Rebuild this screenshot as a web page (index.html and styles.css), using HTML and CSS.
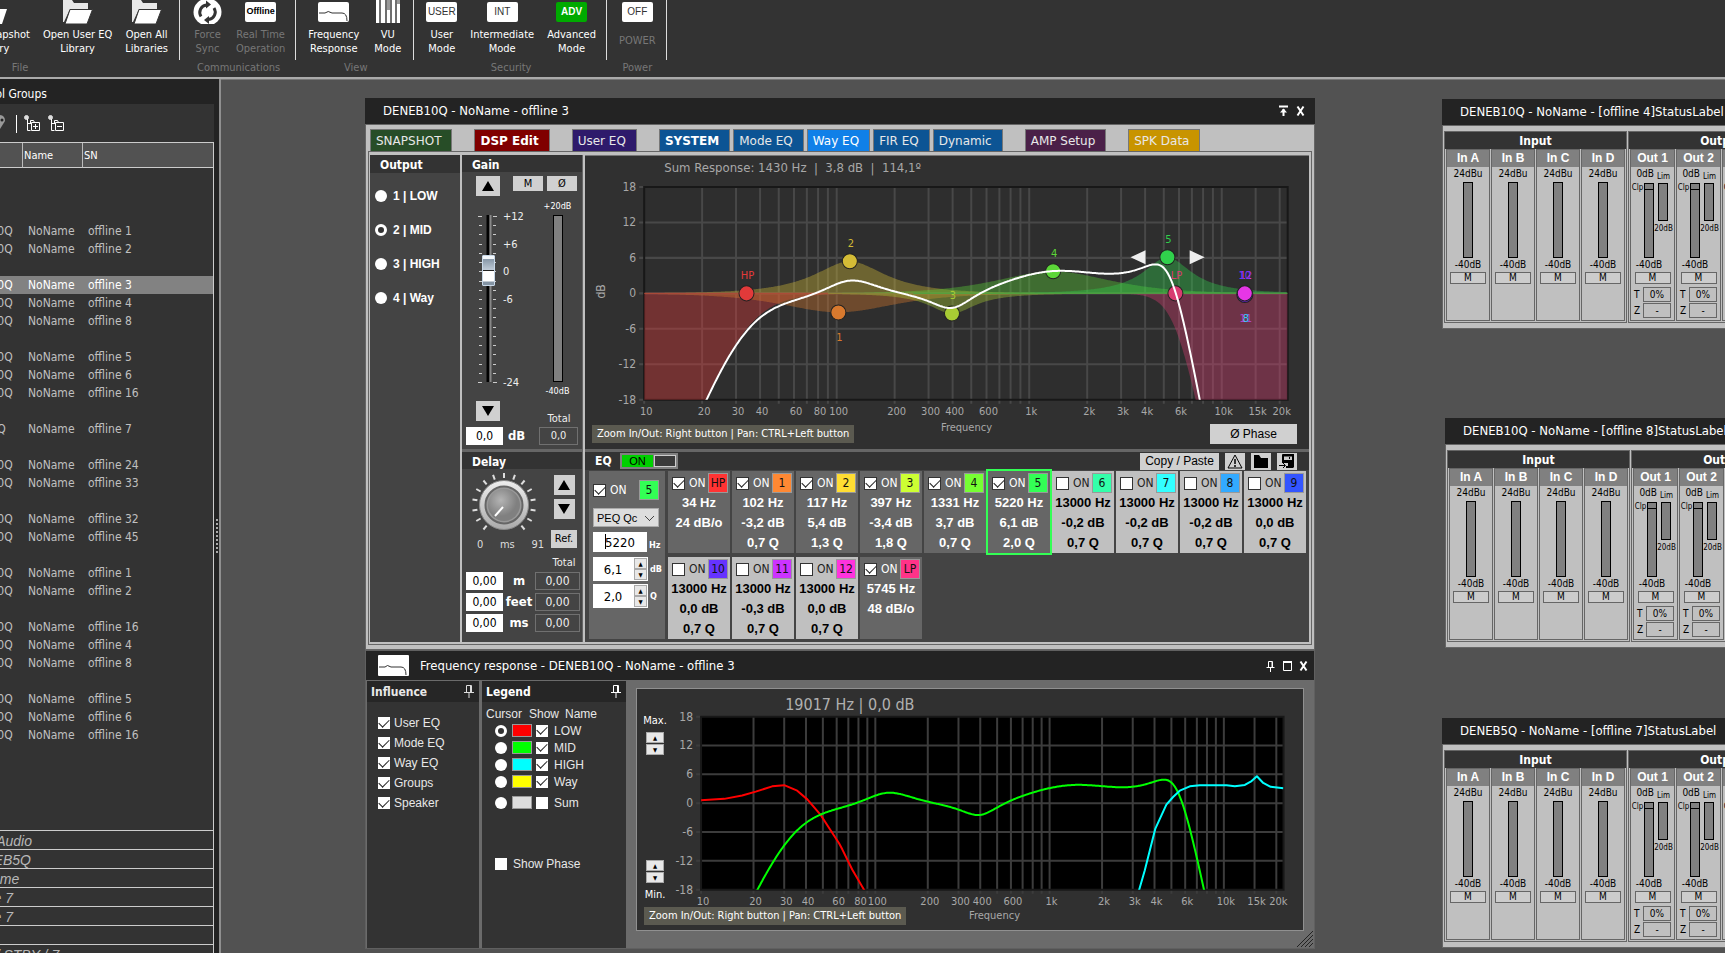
FILE: index.html
```html
<!DOCTYPE html>
<html lang="en">
<head>
<meta charset="utf-8">
<title>DSP Control</title>
<link rel="stylesheet" href="styles.css">
</head>
<body>
<div class="app">
  <header class="ribbon">
    <section class="rgroup rgroup-file">
      <div class="ritems">
        <button class="ritem"><svg class="ricon" viewBox="0 0 31 24"><path d="M0 0h8l2 4h12v4H6L1 20z" fill="#eee"/><path d="M7 9h24l-5 15H1z" fill="#fff"/></svg><span>Open Snapshot<br>Library</span></button>
        <button class="ritem"><svg class="ricon" viewBox="0 0 31 24"><path d="M1 0h9l2 3h14v6H8L2 22H1z" fill="#e8e8e8"/><path d="M8 9.500h22.500L25 24H3z" fill="#fff" stroke="#333"/></svg><span>Open User EQ<br>Library</span></button>
        <button class="ritem"><svg class="ricon" viewBox="0 0 31 24"><path d="M1 0h9l2 3h14v6H8L2 22H1z" fill="#e8e8e8"/><path d="M8 9.500h22.500L25 24H3z" fill="#fff" stroke="#333"/></svg><span>Open All<br>Libraries</span></button>
      </div>
      <h2>File</h2>
    </section>
    <section class="rgroup">
      <div class="ritems">
        <button class="ritem off"><svg class="ricon" viewBox="0 0 31 24"><ellipse cx="15.500" cy="12" rx="14" ry="13.500" fill="#fff"/><path d="M14.500 5a7.500 7.500 0 0 0-5.500 11.500M16.500 19.500a7.500 7.500 0 0 0 5.500-11.500" fill="none" stroke="#333" stroke-width="3"/><path d="M14 0.500v8l5-4zM17 16v8l-5-4z" fill="#333"/></svg><span>Force<br>Sync</span></button>
        <button class="ritem off"><b class="tile tile-dark">Offline</b><span>Real Time<br>Operation</span></button>
      </div>
      <h2>Communications</h2>
    </section>
    <section class="rgroup">
      <div class="ritems">
        <button class="ritem"><svg class="ricon" viewBox="0 0 31 24"><rect y="2" width="31" height="20" rx="2" fill="#fff"/><path d="M1 13h6q3-3 7 0h10q5 0 5 8" fill="none" stroke="#333"/></svg><span>Frequency<br>Response</span></button>
        <button class="ritem"><svg class="ricon" viewBox="0 0 31 24"><path d="M4 0h24v23H4z" fill="#999"/><path d="M4 0h3v23H4zM9 0h4v23H9zM15 10h3v13h-3zM20 0h3v23h-3zM25 4h3v19h-3z" fill="#fff"/><path d="M8 0v23M14 0v23M19 0v23M24 0v23" stroke="#444"/></svg><span>VU<br>Mode</span></button>
      </div>
      <h2>View</h2>
    </section>
    <section class="rgroup">
      <div class="ritems">
        <button class="ritem"><b class="tile">USER</b><span>User<br>Mode</span></button>
        <button class="ritem"><b class="tile">INT</b><span>Intermediate<br>Mode</span></button>
        <button class="ritem"><b class="tile tile-adv">ADV</b><span>Advanced<br>Mode</span></button>
      </div>
      <h2>Security</h2>
    </section>
    <section class="rgroup">
      <div class="ritems">
        <button class="ritem off"><b class="tile">OFF</b><span class="single">POWER</span></button>
      </div>
      <h2>Power</h2>
    </section>
  </header>

  <div class="main">
    <aside class="sidebar">
      <div class="side-col">
        <h1 class="side-title"><span>Control Groups</span></h1>
        <div class="side-tools">
          <svg width="72" height="20" viewBox="0 0 72 20"><path d="M-4 1h3q6 0 6 6l-5 8z" fill="#999"/><circle cx="2" cy="6" r="1.500" fill="#222"/><path d="M16.500 1v18" stroke="#fff"/>
            <g id="tree" fill="none" stroke="#fff"><circle cx="26.500" cy="3.500" r="2" fill="#ddd" stroke="#ddd"/><path d="M27.500 5v11.500h3M28 9.500h3M30.500 9V6.500h3l1 2"/><path d="M31.500 8.500h8v8h-8z" fill="#333"/><path d="M33 12.500h5"/></g>
            <path d="M35.500 10v5" stroke="#fff"/>
            <use href="#tree" x="24"/></svg>
        </div>
        <div class="side-list">
          <table class="groups">
            <thead><tr><th>Device</th><th>Name</th><th>SN</th></tr></thead>
            <tbody id="group-rows"></tbody>
          </table>
        </div>
        <div class="side-props">
          <table class="props">
            <tbody>
              <tr><td>DAS Audio</td></tr><tr><td>DENEB5Q</td></tr><tr><td>NoName</td></tr><tr><td>offline 7</td></tr><tr><td>offline 7</td></tr><tr><td></td></tr><tr><td>OFF / STBY / 7</td></tr>
            </tbody>
          </table>
        </div>
      </div>
      <div class="sash"><i></i><i></i><i></i><i></i><i></i><i></i><i></i><i></i><i></i></div>
    </aside>

    <main class="desk" id="desk">
      <section class="win win-dsp">
        <div class="titlebar">
          <h2>DENEB10Q - NoName - offline 3</h2>
          <svg width="28" height="12" viewBox="0 0 28 12"><path d="M1 1.500h9M5.500 11V4" fill="none" stroke="#fff" stroke-width="2"/><path d="M2 7.500l3.500-4 3.500 4z" fill="#fff"/><path d="M19.500 1.500l6 9M25.500 1.500l-6 9" stroke="#fff" stroke-width="2"/></svg>
        </div>
        <div class="dsp-body">
          <nav class="tabs">
            <button class="tab t-green">SNAPSHOT</button>
            <button class="tab t-red strong apart">DSP Edit</button>
            <button class="tab t-violet apart">User EQ</button>
            <button class="tab t-blue strong apart">SYSTEM</button>
            <button class="tab t-blue">Mode EQ</button>
            <button class="tab t-active">Way EQ</button>
            <button class="tab t-blue">FIR EQ</button>
            <button class="tab t-blue">Dynamic</button>
            <button class="tab t-plum apart">AMP Setup</button>
            <button class="tab t-gold apart">SPK Data</button>
          </nav>
          <div class="dsp-panels">
            <section class="outputs">
              <h3>Output</h3>
              <label><input type="radio" name="out">1 | LOW</label>
              <label><input type="radio" name="out" checked>2 | MID</label>
              <label><input type="radio" name="out">3 | HIGH</label>
              <label><input type="radio" name="out">4 | Way</label>
            </section>
            <div class="levels">
              <section class="gain">
                <h3>Gain</h3>
                <div class="gain-top">
                  <button class="btn arrow" aria-label="Gain up"><svg width="12" height="10" viewBox="0 0 12 10"><path d="M6 0l6 10H0z"/></svg></button>
                  <button class="btn mute">M</button><button class="btn mute">Ø</button>
                </div>
                <div class="gain-mid">
                  <div class="fader">
                    <svg id="fader-scale" width="56" height="205" viewBox="0 0 56 205"></svg>
                    <input type="range" min="-24" max="12" value="0" aria-label="Gain">
                  </div>
                  <div class="vu"><span>+20dB</span><i class="meter"></i><span>-40dB</span></div>
                </div>
                <div class="gain-low">
                  <button class="btn arrow" aria-label="Gain down"><svg width="12" height="10" viewBox="0 0 12 10"><path d="M6 10L0 0h12z"/></svg></button>
                  <span class="total">Total</span>
                </div>
                <div class="gain-val"><input type="text" value="0,0" aria-label="Gain in dB"><b>dB</b><output>0,0</output></div>
              </section>
              <section class="delay">
                <h3>Delay</h3>
                <div class="delay-top">
                  <div class="knob">
                    <svg id="knob" width="68" height="66" viewBox="-34 -33 68 66">
                      <defs><radialGradient id="kg" cx=".4" cy=".35"><stop offset="0" stop-color="#b4b4b4"/><stop offset="1" stop-color="#808080"/></radialGradient>
                      <linearGradient id="kr" x1="0" y1="0" x2="0" y2="1"><stop offset="0" stop-color="#eee"/><stop offset="1" stop-color="#aaa"/></linearGradient></defs>
                      <circle r="24.500" fill="url(#kr)" stroke="#888"/><circle r="18.500" fill="#999" stroke="#666" stroke-width="2"/><circle r="16" fill="url(#kg)"/><path d="M-1 2l-8 9" stroke="#fff" stroke-width="2"/>
                    </svg>
                    <div class="knob-scale"><span>0</span><span>ms</span><span>91</span></div>
                  </div>
                  <div class="delay-btns">
                    <button class="btn arrow" aria-label="Delay up"><svg width="12" height="10" viewBox="0 0 12 10"><path d="M6 0l6 10H0z"/></svg></button>
                    <button class="btn arrow" aria-label="Delay down"><svg width="12" height="10" viewBox="0 0 12 10"><path d="M6 10L0 0h12z"/></svg></button>
                    <button class="btn ref">Ref.</button>
                    <span class="total">Total</span>
                  </div>
                </div>
                <div class="delay-vals">
                  <input type="text" value="0,00" aria-label="Delay in metres"><b>m</b><output>0,00</output>
                  <input type="text" value="0,00" aria-label="Delay in feet"><b>feet</b><output>0,00</output>
                  <input type="text" value="0,00" aria-label="Delay in milliseconds"><b>ms</b><output>0,00</output>
                </div>
              </section>
            </div>
            <div class="eq-side">
              <section class="way-chart">
                <svg id="way-chart" viewBox="586 155 722 293"></svg>
                <div class="chart-foot">
                  <span class="hint">Zoom In/Out: Right button | Pan: CTRL+Left button</span>
                  <span class="axis">Frequency</span>
                  <button class="btn phase">Ø Phase</button>
                </div>
              </section>
              <section class="eq">
                <div class="eq-head">
                  <h3>EQ</h3>
                  <button class="toggle" aria-label="EQ on"><b>ON</b><i></i></button>
                  <button class="btn copy">Copy / Paste</button>
                  <button class="btn sq" aria-label="Warning"><svg width="16" height="15" viewBox="0 0 16 15"><path d="M8 1l7 13H1z" fill="none" stroke="#000"/><path d="M8 5v5M8 11v2" stroke="#000" stroke-width="1.500"/></svg></button>
                  <button class="btn sq" aria-label="Open"><svg width="16" height="15" viewBox="0 0 16 15"><path d="M1 1h5l2 3h7v10H1z"/></svg></button>
                  <button class="btn sq" aria-label="Save"><svg width="16" height="15" viewBox="0 0 16 15"><path d="M3 1q0-1 1-1h11v13l-1 1H7v-2h2V9H3z"/><path d="M5 2.500h8v3.500H5z" fill="#ccc"/><path d="M10.500 3v2" stroke="#000"/><path d="M0 11.500h6M4 9l2.500 2.500L4 14" stroke="#000" fill="none"/></svg></button>
                </div>
                <div class="eq-body">
                  <div class="band-edit">
                    <div class="band-on"><label><input type="checkbox" checked>ON</label><b class="badge" style="background:#33ff55">5</b></div>
                    <select aria-label="Filter type"><option>PEQ Qc</option></select>
                    <div class="field caret"><input type="text" value="5220" aria-label="Frequency"><span>Hz</span></div>
                    <div class="field spin"><input type="text" value="6,1" aria-label="Level"><span class="steps"><button aria-label="Up">▲</button><button aria-label="Down">▼</button></span><span>dB</span></div>
                    <div class="field spin"><input type="text" value="2,0" aria-label="Quality"><span class="steps"><button aria-label="Up">▲</button><button aria-label="Down">▼</button></span><span>Q</span></div>
                  </div>
                  <div class="bands" id="bands"></div>
                </div>
              </section>
            </div>
          </div>
        </div>
      </section>

      <section class="win win-freq">
        <div class="titlebar">
          <svg class="wicon" width="31" height="21" viewBox="0 0 31 21"><rect width="31" height="21" rx="1" fill="#fff"/><path d="M1 12h6q2-3 6 0h10q5 0 5 8" fill="none" stroke="#333"/></svg>
          <h2>Frequency response - DENEB10Q - NoName - offline 3</h2>
          <svg width="44" height="12" viewBox="0 0 44 12"><path d="M3.500 1.500h4v6h-4zM1.500 7.500h8M5.500 8v4M7 2v5" fill="none" stroke="#fff"/><path d="M18.500 2h8v8.500h-8z" fill="none" stroke="#fff"/><path d="M18 2h9" stroke="#fff" stroke-width="2"/><path d="M35.500 1.500l6 9M41.500 1.500l-6 9" stroke="#fff" stroke-width="2"/></svg>
        </div>
        <div class="freq-body">
          <section class="dock influence">
            <h3>Influence<svg width="10" height="13" viewBox="0 0 10 13"><path d="M2.500.5h5v7h-5zM0 7.500h10M5 8v5M6.500 1v6" fill="none" stroke="#ddd"/></svg></h3>
            <div class="checks">
              <label><input type="checkbox" checked>User EQ</label>
              <label><input type="checkbox" checked>Mode EQ</label>
              <label><input type="checkbox" checked>Way EQ</label>
              <label><input type="checkbox" checked>Groups</label>
              <label><input type="checkbox" checked>Speaker</label>
            </div>
          </section>
          <section class="dock legend">
            <h3>Legend<svg width="10" height="13" viewBox="0 0 10 13"><path d="M2.500.5h5v7h-5zM0 7.500h10M5 8v5M6.500 1v6" fill="none" stroke="#fff"/></svg></h3>
            <div class="legend-head"><span>Cursor</span><span>Show</span><span>Name</span></div>
            <div class="legend-rows" id="legend-rows"></div>
            <label class="show-phase"><input type="checkbox">Show Phase</label>
          </section>
          <section class="resp">
            <div class="resp-main">
              <div class="range-col">
                <div><span>Max.</span><button aria-label="Maximum up">▲</button><button aria-label="Maximum down">▼</button></div>
                <div><button aria-label="Minimum up">▲</button><button aria-label="Minimum down">▼</button><span>Min.</span></div>
              </div>
              <svg id="resp-chart" viewBox="674 689 629 216"></svg>
            </div>
            <div class="resp-foot"><span class="hint">Zoom In/Out: Right button | Pan: CTRL+Left button</span><span class="axis">Frequency</span></div>
          </section>
        </div>
        <svg class="grip" width="16" height="16" viewBox="0 0 16 16"><path d="M0 16L16 0M4 16L16 4M8 16l8-8M12 16l4-4" stroke="#222"/></svg>
      </section>
    </main>
  </div>
</div>
<script src="app.js"></script>
</body>
</html>
```

FILE: styles.css
```css
:root {
  --ui: "DejaVu Sans Condensed", "Noto Sans", sans-serif;
  --wide: "DejaVu Sans", sans-serif;
  --arial: "Liberation Sans", Arial, sans-serif;
  --dark: #232323;
  --panel: #333;
  --body: #444;
  --desk: #525252;
  --light: #c0c0c0;
  --line: #666;
  --button: #d0d0d0;
}
* { box-sizing: border-box; }
body { margin: 0; font: 12px/14px var(--ui); color: #fff; background: var(--desk); overflow: hidden; }
h1, h2, h3 { margin: 0; font-size: 12px; font-weight: normal; }
button, input, select { font: inherit; color: #000; margin: 0; padding: 0; border: 0; border-radius: 0; min-width: 0; }
button { cursor: pointer; background: none; }
svg { display: block; }
svg text { white-space: pre; }
.app { height: 100vh; display: flex; flex-direction: column; overflow: hidden; }

/* ribbon */
.ribbon { flex: none; display: flex; height: 79px; background: var(--panel); border-bottom: 2px solid #aaa; overflow: hidden; }
.rgroup { flex: none; position: relative; padding: 0 11px 0 12px; }
.rgroup::after { content: ""; position: absolute; right: 0; top: 0; width: 1px; height: 60px; background: #ddd; }
.rgroup-file { width: 320px; margin-left: -140px; padding-right: 12px; }
.rgroup-file .ritems { justify-content: flex-end; }
.ritems { display: flex; gap: 13px; height: 61px; }
.ritem { color: #fff; display: flex; flex-direction: column; align-items: center; font-size: 11px; line-height: 14px; }
.ritem.off { color: #777; }
.ricon { width: 31px; height: 24px; margin-bottom: 4px; }
.tile { width: 31px; height: 20px; margin: 2px 0 6px; border-radius: 2px; background: #fff; color: #333; font: 10px/19px var(--arial); }
.tile-dark { color: #000; font-weight: bold; font-size: 9px; }
.tile-adv { background: #00aa00; color: #fff; font-weight: bold; }
.single { padding-top: 6px; }
.rgroup h2 { text-align: center; color: #777; font-size: 11px; line-height: 14px; }

.main { flex: 1; min-height: 0; display: flex; }

/* sidebar */
.sidebar { flex: none; width: 221px; display: flex; background: var(--dark); border-right: 2px solid #909090; }
.side-col { width: 214px; display: flex; flex-direction: column; min-height: 0; overflow: hidden; }
.side-title { height: 25px; line-height: 30px; flex: none; overflow: hidden; }
.side-title span { display: block; margin-left: -34px; white-space: nowrap; }
.side-tools { height: 38px; flex: none; padding-top: 10px; background: var(--panel); }
.side-list { flex: 1; min-height: 0; overflow: hidden; background: var(--panel); border-top: 1px solid #ccc; border-right: 1px solid #ccc; }
.groups { table-layout: fixed; width: 261px; margin-left: -48px; border-collapse: separate; border-spacing: 0; color: #c0c0c0; }
.groups th { height: 25px; padding: 2px 0 0 1px; text-align: left; font: 11px/14px var(--ui); color: #fff; background: var(--desk); border-right: 1px solid #bbb; border-bottom: 1px solid #ccc; }
.groups th:last-child { border-right: 0; }
.groups th:nth-child(1) { width: 71px; }
.groups th:nth-child(2) { width: 60px; }
.groups td { height: 18px; padding: 0 0 0 5px; line-height: 18px; white-space: nowrap; }
.groups td:first-child { padding-left: 1px; }
.groups .sel { background: #828282; color: #fff; }
.side-props { flex: none; height: 123px; overflow: hidden; background: var(--panel); border-right: 1px solid #ccc; }
.props { width: 253px; margin-left: -40px; border-collapse: separate; border-spacing: 0; color: #b8b8b8; }
.props td { height: 19px; padding: 2px 0 0 4px; font: italic 14px/16px var(--arial); border-top: 1px solid #ccc; }
.sash { flex: 1; display: flex; flex-direction: column; align-items: center; justify-content: center; gap: 2px; padding-top: 40px; }
.sash i { width: 2px; height: 2px; background: #aaa; }

/* desktop and windows */
.desk { flex: 1; position: relative; overflow: hidden; min-width: 0; border-top: 1px solid #777; }
.win { position: absolute; }
.titlebar { display: flex; align-items: center; background: var(--dark); height: 26px; padding: 0 9px 0 18px; }
.titlebar h2 { flex: 1; font-size: 13px; line-height: 20px; white-space: nowrap; }
.win-dsp { left: 144px; top: 18px; width: 950px; }
.dsp-body { background: var(--light); border: 1px solid var(--line); padding: 4px 4px 4px; }
.tabs { display: flex; gap: 3px; height: 22px; }
.tab { padding: 0 10px 0 5px; font: 12px/22px var(--wide); color: #e8e8e8; text-align: left; border: 1px solid #777; border-bottom: 0; white-space: nowrap; }
.apart { margin-left: 19px; }
.strong { font-weight: bold; color: #fff; }
.t-green { background: #274d27; }
.t-red { background: #800000; }
.t-violet { background: #2e1a6b; }
.t-blue { background: #0c5494; }
.t-active { background: #1080e8; color: #fff; }
.t-plum { background: #4a2048; }
.t-gold { background: #c89400; }
.dsp-panels { display: flex; gap: 2px; border: 1px solid var(--line); padding: 3px 2px 2px 1px; margin: 0 -2px; }
.outputs { width: 90px; background: var(--body); font: bold 12px/14px var(--arial); display: flex; flex-direction: column; gap: 20px; }
.outputs h3 { height: 18px; padding: 0 10px; background: var(--panel); font: bold 12px/20px var(--ui); }
.outputs label { display: flex; align-items: center; gap: 6px; padding-left: 5px; height: 14px; }
.outputs h3 + label { margin-top: -4px; }
input[type=radio] { appearance: none; width: 12px; height: 12px; border-radius: 50%; background: #fff; flex: none; }
input[type=radio]:checked { background: #333; border: 3px solid #fff; }
input[type=checkbox] { appearance: none; width: 12px; height: 12px; background: #fff; flex: none; display: grid; place-items: center; }
input[type=checkbox]:checked::after { content: ""; width: 9px; height: 5px; margin-top: -3px; border: solid #222; border-width: 0 0 1px 1px; transform: rotate(-45deg); }

.btn { background: var(--button); display: flex; align-items: center; justify-content: center; flex: none; line-height: 14px; white-space: nowrap; }
.arrow { width: 24px; height: 20px; }
.levels { width: 121px; display: flex; flex-direction: column; gap: 3px; background: var(--line); }
.levels section { background: var(--body); margin-right: 1px; }
.levels h3 { height: 17px; padding-left: 10px; background: var(--panel); font: bold 12px/20px var(--ui); }
.gain { height: 294px; }
.gain-top { display: flex; align-items: flex-start; padding: 4px 0 0 14px; height: 24px; }
.mute { width: 30px; height: 15px; font-size: 11px; margin-left: 4px; }
.arrow + .mute { margin-left: 13px; }
.gain-mid { display: flex; padding-left: 14px; height: 205px; justify-content: space-between; }
.fader { display: grid; align-items: center; justify-items: start; }
.fader > * { grid-area: 1 / 1; }
.fader input { width: 15px; height: 197px; margin-left: 5px; appearance: none; background: none; writing-mode: vertical-lr; direction: rtl; }
.fader input::-webkit-slider-thumb { appearance: none; width: 13px; height: 31px; border: 1px solid #c8d8e8; border-radius: 1px; background: linear-gradient(#f4f8fc 0 3px, #8c9cac 3px 4px, #c0ccd8 14px, #222 14px 15px, #fff 15px 25px, #8494a4 26px); }
.vu { width: 49px; display: flex; flex-direction: column; align-items: center; font: 9px/12px var(--ui); padding-top: 4px; gap: 3px; }
.meter { width: 10px; background: #808080; border: 1px solid #000; }
.vu .meter { height: 167px; }
.gain-low { display: flex; padding-left: 14px; height: 25px; justify-content: space-between; }
.total { width: 46px; text-align: center; font-size: 11px; line-height: 14px; color: #eee; }
.gain-low .total { padding-top: 11px; }
.gain-val { display: flex; align-items: center; padding: 0 4px; gap: 5px; height: 19px; }
.gain-val input, .delay-vals input { width: 37px; height: 18px; background: #fff; text-align: center; font-size: 12px; }
.gain-val b, .delay-vals b { font: bold 13px/16px var(--ui); text-align: center; }
.gain-val output { margin-left: auto; width: 39px; }
output { height: 18px; border: 1px solid #707070; text-align: center; line-height: 16px; color: #eee; font-size: 11px; }
.delay { flex: 1; }
.delay-top { display: flex; }
.knob { width: 84px; padding-left: 8px; }
.knob svg { margin-top: 3px; }
.knob-scale { display: flex; justify-content: space-between; padding: 0 2px 0 7px; font-size: 11px; color: #ddd; }
.delay-btns { flex: 1; display: flex; flex-direction: column; align-items: center; gap: 4px; padding-top: 6px; }
.delay-btns .arrow { width: 21px; }
.ref { width: 26px; height: 18px; margin-top: 7px; font-size: 11px; }
.delay-btns .total { padding-top: 4px; width: auto; }
.delay-vals { display: grid; grid-template-columns: 37px 32px 45px; row-gap: 3px; padding: 2px 0 0 4px; align-items: center; }
.delay-vals output { font-size: 12px; }

/* chart and equaliser */
.eq-side { flex: 1; min-width: 0; display: flex; flex-direction: column; gap: 3px; background: var(--line); }
.way-chart { background: #303030; height: 294px; border-top: 1px solid #777; display: grid; }
.way-chart > * { grid-area: 1 / 1; }
.way-chart svg { width: 100%; }
.chart-foot { align-self: end; display: grid; grid-template-columns: 1fr auto 1fr; align-items: center; padding: 0 12px 2px 7px; }
.chart-foot .axis { padding: 0 0 12px 44px; }
.hint { justify-self: start; background: #5b5a50; color: #fff; font-size: 11px; line-height: 18px; padding: 0 5px; white-space: nowrap; }
.axis { color: #a8a8a8; font-size: 11px; line-height: 14px; }
.phase { justify-self: end; width: 87px; height: 20px; font: 12px/14px var(--arial); }
.eq { background: var(--body); flex: 1; }
.eq-head { display: flex; align-items: center; background: var(--panel); height: 18px; padding: 0 12px 0 10px; gap: 6px; }
.eq-head h3 { font: bold 12px/16px var(--ui); width: 19px; }
.toggle { display: flex; width: 58px; height: 16px; border: 2px solid #808080; background: #808080; gap: 1px; }
.toggle b { flex: 1; background: #00d000; font: 11px/12px var(--arial); }
.toggle i { width: 22px; background: #3a3a3a; border: 1px solid #ccc; }
.copy { margin-left: auto; width: 79px; height: 17px; font: 12px/14px var(--arial); }
.sq { width: 20px; height: 17px; }
.eq-body { display: flex; padding: 1px 0 3px 4px; gap: 3px; }
.band-edit { width: 76px; background: var(--line); padding: 9px 0 0 4px; display: flex; flex-direction: column; gap: 5px; color: #fff; font-size: 12px; }
.band-on { display: flex; justify-content: space-between; align-items: center; padding-right: 6px; margin-bottom: 3px; }
.eq label { display: flex; align-items: center; gap: 4px; font-size: 12px; }
.eq input[type=checkbox] { width: 13px; height: 13px; border: 1px solid #333; }
.badge { width: 20px; height: 20px; border: 1px solid #999; color: #111; font: 12px/18px var(--ui); text-align: center; }
.band-edit select {
  width: 66px; height: 19px; padding-left: 3px; border: 1px solid #aaa; appearance: none; font: 11px/14px var(--arial);
  background-color: #ddd; background-repeat: no-repeat; background-size: 5px 5px; background-position: 51px 7px, 55px 7px;
  background-image: linear-gradient(45deg, transparent 42%, #444 42% 58%, transparent 58%), linear-gradient(-45deg, transparent 42%, #444 42% 58%, transparent 58%);
}
.field { display: flex; align-items: flex-end; font: bold 9px/14px var(--ui); gap: 2px; }
.field input { width: 54px; height: 20px; background: #fff; text-align: center; font: 13px/16px var(--ui); }
.caret { position: relative; }
.caret::before { content: ""; position: absolute; left: 12px; top: 2px; width: 1px; height: 15px; background: #000; }
.spin { height: 24px; align-items: center; }
.spin + .spin { margin-top: -2px; }
.spin input { width: 40px; height: 24px; }
.steps { display: flex; flex-direction: column; width: 15px; height: 24px; margin-left: -2px; background: #fff; padding: 1px; }
.steps button, .range-col button { display: block; flex: 1; background: #e8e8e8; border: 1px solid #aaa; font: 6px/8px var(--ui); text-align: center; }
.bands { flex: 1; display: grid; grid-template-columns: repeat(10, 62px); gap: 4px 2px; align-content: start; }
.band { height: 82px; background: var(--light); color: #000; padding: 2px 2px 0 4px; }
.band.on { background: var(--line); color: #fff; }
.band.cur { outline: 2px solid #33ff55; }
.band-top { display: flex; justify-content: space-between; align-items: center; height: 20px; }
.band:not(.on) label { color: #222; }
.band p { margin: 0 0 0 -2px; font: bold 13px/20px var(--arial); text-align: center; white-space: nowrap; }

/* response window */
.win-freq { left: 144px; top: 570px; width: 950px; border: 1px solid #606060; background: #6b6b6b; }
.win-freq .titlebar { height: 29px; padding: 0 5px 0 12px; }
.wicon { margin-right: 11px; }
.freq-body { display: flex; gap: 3px; height: 268px; padding: 1px 10px 0 1px; }
.dock { background: var(--panel); font: 12px/14px var(--arial); color: #e8e8e8; }
.dock h3 { display: flex; justify-content: space-between; align-items: center; height: 21px; padding: 0 5px 0 4px; background: #262626; font: bold 12px/14px var(--ui); }
.influence { width: 112px; }
.legend { width: 144px; }
.legend h3 { color: #fff; }
.checks { display: flex; flex-direction: column; gap: 6px; padding: 14px 0 0 11px; }
.checks label, .show-phase { display: flex; align-items: center; gap: 4px; height: 14px; }
.legend-head { display: flex; padding: 5px 0 1px 4px; gap: 6px; }
.legend-head span:first-child { width: 37px; }
.legend-row { display: flex; align-items: center; height: 17px; padding-left: 13px; }
.legend-row i { width: 20px; height: 13px; border: 1px solid #999; margin: 0 4px 0 5px; }
.legend-row span { margin-left: 6px; }
.legend-row:last-child { margin-top: 4px; }
.show-phase { padding-left: 13px; margin-top: 46px; gap: 6px; }
.resp { flex: 1; min-width: 0; margin: 7px 0 17px 7px; border: 1px solid #909090; background: #303030; }
.resp-main { display: flex; }
.range-col { width: 36px; padding: 25px 0 3px 7px; display: flex; flex-direction: column; justify-content: space-between; }
.range-col div { display: flex; flex-direction: column; gap: 1px; font-size: 11px; width: 22px; white-space: nowrap; align-items: center; }
.range-col button { flex: none; width: 18px; height: 11px; color: #000; }
.range-col span:first-child { margin-bottom: 3px; }
.range-col span:last-child { margin-top: 4px; }
.resp-main svg { flex: 1; min-width: 0; }
.resp-foot { display: grid; grid-template-columns: 1fr auto 1fr; align-items: center; padding: 2px 0 0 7px; }
.resp-foot .axis { padding-left: 42px; }
.grip { position: absolute; right: 1px; bottom: 1px; }

/* device windows */
.win-dev { width: 380px; }
.dev-body { display: flex; gap: 1px; padding: 5px 2px 5px 1px; background: var(--light); border: 1px solid var(--line); color: #000; font: 11px/14px var(--ui); }
.bank { border: 1px solid var(--line); display: grid; }
.bank h3 { background: var(--panel); color: #fff; font: bold 12px/19px var(--ui); text-align: center; height: 17px; }
.bank-cols { display: flex; gap: 1px; padding: 0 1px 1px; }
.strip { width: 44px; height: 172px; border: 1px solid var(--line); display: flex; flex-direction: column; }
.out .strip { width: 45px; }
.strip h4 { margin: 0; height: 17px; background: #808080; color: #fff; font: bold 12px/16px var(--arial); text-align: center; }
.strip-meter { display: flex; flex-direction: column; align-items: center; font: 10px/12px var(--ui); }
.strip-meter .meter { height: 76px; }
.strip-meter span { height: 14px; line-height: 13px; }
.strip-meter span:first-child { height: 15px; }
.strip-m { width: 36px; height: 12px; margin: 0 auto; border: 1px solid var(--line); background: #ccc; font: 10px/10px var(--ui); }
.out-meter { display: grid; grid-template-columns: 13px 10px 19px; height: 105px; font: 8px/10px var(--ui); justify-items: center; align-content: start; }
.out-meter .zero { grid-column: 1 / 3; grid-row: 1; font-size: 10px; line-height: 13px; height: 16px; justify-self: end; }
.out-meter .lim { height: 16px; padding-top: 5px; }
.out-meter .clp { padding-top: 0; }
.out-meter .meter { height: 75px; }
.out-meter .meter.clip::before { content: ""; display: block; height: 5px; border-bottom: 1px solid #000; }
.out-meter .side { display: flex; flex-direction: column; align-items: center; gap: 3px; }
.out-meter .side .meter { height: 38px; }
.out-meter .low { grid-column: 1 / 4; justify-self: center; font-size: 10px; line-height: 13px; padding-right: 6px; }
.tz { display: grid; grid-template-columns: 8px 28px; justify-content: center; align-items: center; gap: 1px; padding: 3px 0 0; font: 10px/14px var(--ui); }
.tz output { height: 15px; width: 28px; color: #000; line-height: 13px; font-size: 10px; border-color: var(--line); }
```

FILE: app.js
```js
const $ = (id) => document.getElementById(id);

/* sidebar rows: SN number, or 0 for a blank group header row */
const rows = [0, 0, 0, 1, 2, 0, 3, 4, 8, 0, 5, 6, 16, 0, 7, 0, 24, 33, 0, 32, 45, 0, 1, 2, 0, 16, 4, 8, 0, 5, 6, 16];
$('group-rows').innerHTML = rows.map((n) => n
  ? `<tr${n === 3 ? ' class="sel"' : ''}><td>${n === 7 ? 'DENEB5Q' : 'DENEB10Q'}</td><td>NoName</td><td>offline ${n}</td></tr>`
  : '<tr><td></td><td></td><td></td></tr>').join('');

/* equaliser bands */
const bands = [
  ['HP', '#ff3333', 1, '34 Hz', '24 dB/o', ''],
  ['1', '#ff8833', 1, '102 Hz', '-3,2 dB', '0,7 Q'],
  ['2', '#ffdd33', 1, '117 Hz', '5,4 dB', '1,3 Q'],
  ['3', '#ccff33', 1, '397 Hz', '-3,4 dB', '1,8 Q'],
  ['4', '#77ff33', 1, '1331 Hz', '3,7 dB', '0,7 Q'],
  ['5', '#33ff55', 1, '5220 Hz', '6,1 dB', '2,0 Q'],
  ['6', '#33ffaa', 0, '13000 Hz', '-0,2 dB', '0,7 Q'],
  ['7', '#33ffff', 0, '13000 Hz', '-0,2 dB', '0,7 Q'],
  ['8', '#33aaff', 0, '13000 Hz', '-0,2 dB', '0,7 Q'],
  ['9', '#3355ff', 0, '13000 Hz', '0,0 dB', '0,7 Q'],
  ['10', '#6633ff', 0, '13000 Hz', '0,0 dB', '0,7 Q'],
  ['11', '#cc33ff', 0, '13000 Hz', '-0,3 dB', '0,7 Q'],
  ['12', '#ff33dd', 0, '13000 Hz', '0,0 dB', '0,7 Q'],
  ['LP', '#ff3388', 1, '5745 Hz', '48 dB/o', ''],
];
$('bands').innerHTML = bands.map(([n, c, on, f, g, q]) => `
  <div class="band${on ? ' on' : ''}${n === '5' ? ' cur' : ''}">
    <div class="band-top"><label><input type="checkbox"${on ? ' checked' : ''}>ON</label><b class="badge" style="background:${c}">${n}</b></div>
    <p>${f}</p><p>${g}</p><p>${q}</p>
  </div>`).join('');

/* legend */
$('legend-rows').innerHTML = [['LOW', '#f00'], ['MID', '#0f0'], ['HIGH', '#0ff'], ['Way', '#ff0'], ['Sum', '#ddd']].map(([n, c], i) => `
  <div class="legend-row"><input type="radio" name="cursor" aria-label="Cursor ${n}"${i ? '' : ' checked'}><i style="background:${c}"></i><input type="checkbox" id="show-${n}"${i < 4 ? ' checked' : ''}><span><label for="show-${n}">${n}</label></span></div>`).join('');

/* fader scale */
{
  let s = '<path d="M12 19v167" stroke="#000" stroke-width="3"/><path d="M14.500 19v167" stroke="#888" stroke-width="2"/><path stroke="#ccc" d="';
  for (let i = 0; i <= 18; i++) {
    const y = Math.round(20 + i * 9.22) + 0.5, e = i % 18 ? 0 : 1;
    s += `M${3 - e} ${y}h${3 + e}M${17} ${y}h${3 + e}`;
  }
  s += '"/>';
  [['+12', 20], ['+6', 48], ['0', 75], ['-6', 103], ['-24', 186]].forEach(([t, y]) => {
    s += `<text x="27" y="${y + 4}" fill="#eee" font-size="11">${t}</text>`;
  });
  $('fader-scale').innerHTML = s;
}

/* knob ticks */
{
  let d = '';
  for (let i = 0; i <= 14; i++) {
    const a = (i * 20 - 230) * Math.PI / 180;
    d += `M${27 * Math.cos(a)} ${27 * Math.sin(a)}L${32 * Math.cos(a)} ${32 * Math.sin(a)}`;
  }
  $('knob').insertAdjacentHTML('beforeend', `<path d="${d}" stroke="#ddd" stroke-width="2"/>`);
}

/* filter responses in dB; a cut mirrors the boost of the same size */
const peak = (f0, g, q) => (f) => {
  const a = 10 ** (Math.abs(g) / 20), w = f / f0, re = (1 - w * w) ** 2;
  return Math.sign(g) * 10 * Math.log10((re + (w * a / q) ** 2) / (re + (w / q) ** 2));
};
const filters = {
  HP: (f) => -20 * Math.log10(1 + (34 / f) ** 4),
  1: peak(102, -3.2, 0.7), 2: peak(117, 5.4, 1.3), 3: peak(397, -3.4, 1.8),
  4: peak(1331, 3.7, 0.7), 5: peak(5220, 6.1, 2),
  LP: (f) => -20 * Math.log10(1 + (f / 5745) ** 8),
};
const total = (f) => Object.values(filters).reduce((s, h) => s + h(f), 0);

function axes(p) {
  const X = (f) => p.x + p.dec * Math.log10(f / 10);
  const Y = (v) => p.y - v * p.db;
  const right = X(22000), top = Y(18), bot = Y(-18);
  let v = '', s = '';
  for (let d = 10; d < 22000; d *= 10) for (let k = 1; k < 10; k++) {
    const f = d * k;
    if (f > 10 && (f <= 10000)) v += `M${X(f)} ${top}V${bot + 4}`;
  }
  [15000, 20000].forEach((f) => { v += `M${X(f)} ${top}V${bot + 4}`; });
  v += `M${X(10)} ${bot}v4`;
  for (let g = -18; g <= 18; g += 6) {
    v += `M${p.x - 5} ${Y(g)}H${Math.abs(g) === 18 ? p.x : right}`;
    s += `<text x="${p.x - 8}" y="${Y(g) + 4}" text-anchor="end">${g}</text>`;
  }
  [[10, '10'], [20, '20'], [30, '30'], [40, '40'], [60, '60'], [80, '80'], [100, '100'], [200, '200'], [300, '300'], [400, '400'], [600, '600'], [1000, '1k'], [2000, '2k'], [3000, '3k'], [4000, '4k'], [6000, '6k'], [10000, '10k'], [15000, '15k'], [20000, '20k']]
    .forEach(([f, t]) => { s += `<text x="${X(f) + 2}" y="${bot + 15}" text-anchor="middle" font-size="${p.fs}">${t}</text>`; });
  const grid = `<rect x="${p.x}" y="${top}" width="${right - p.x}" height="${bot - top}" fill="${p.bg}"/><path d="${v}" stroke="${p.grid}" stroke-width="2" fill="none"/><path d="M${p.x} ${bot}V${top}H${right}V${bot}z" fill="none" stroke="#181818" stroke-width="2"/>`;
  const labels = `<g fill="#a8a8a8" font-size="12">${s}<text transform="translate(${p.x - 39} ${p.y - 2}) rotate(-90)" text-anchor="middle">dB</text></g>`;
  const line = (fn) => {
    let d = '';
    for (let x = p.x; x <= right; x += 1) {
      const g = fn(10 * 10 ** ((x - p.x) / p.dec));
      d += `${d ? 'L' : 'M'}${x} ${Y(Math.max(g, -40)).toFixed(1)}`;
    }
    return d;
  };
  const clip = `<clipPath id="${p.id}"><rect x="${p.x}" y="${top}" width="${right - p.x}" height="${bot - top}"/></clipPath>`;
  return { X, Y, right, grid, labels, line, clip };
}

/* way equaliser chart */
{
  const a = axes({ x: 645, y: 292, dec: 192, db: 5.9, bg: '#2e2e2e', grid: '#484848', id: 'clip-way', fs: 11 });
  const col = { HP: '#e23a3a', 1: '#d8792e', 2: '#d4bc36', 3: '#a8cc34', 4: '#5cd638', 5: '#30d04c', LP: '#d83c70' };
  const base = a.Y(0);
  let s = a.clip + a.grid + '<g clip-path="url(#clip-way)">';
  ['HP', '1', '2', '3', '4', '5', 'LP'].forEach((k) => {
    s += `<path d="${a.line(filters[k])}L${a.right} ${base}H645z" fill="${col[k]}" fill-opacity=".38"/>`;
  });
  s += `<path d="M${a.X(250)} ${base}H${a.right}" stroke="#48a840"/><path d="M645 ${base}H${a.X(90)}" stroke="#b04438"/></g>`;
  const dot = (x, y, c, t, ty) => `<circle cx="${x}" cy="${y}" r="7.500" fill="${c}" stroke="#222"/><text x="${x + 1}" y="${ty}" fill="${c}" font-size="11" text-anchor="middle">${t}</text>`;
  s += dot(a.X(34), base, col.HP, 'HP', 278) + dot(a.X(102), 311, col[1], '1', 339) + dot(a.X(117), 260, col[2], '2', 246)
    + dot(a.X(397), 312, col[3], '3', 298) + dot(a.X(1331), 270, col[4], '4', 256) + dot(a.X(5220), 256, col[5], '5', 242)
    + dot(a.X(5745), base, col.LP, 'LP', 278)
    + `<circle cx="1244" cy="293" r="8" fill="#62c" stroke="#222"/>` + dot(1244, 292, '#e636e6', '12', 278)
    + '<text x="1244" y="278" fill="#63f" font-size="11" text-anchor="middle">10</text><text x="1245" y="321" fill="#a4c" font-size="11" text-anchor="middle">11</text><text x="1245" y="321" fill="#3cf" font-size="11" text-anchor="middle">8</text>'
    + '<path d="M1145 249v14l-15-7zM1189 249v14l15-7z" fill="#eee"/>'
    + `<path clip-path="url(#clip-way)" d="${a.line(total)}" fill="none" stroke="#fff" stroke-width="2"/>`
    + a.labels + '<text x="665" y="171" fill="#a8a8a8" font-size="13">Sum Response: 1430 Hz  |  3,8 dB  |  114,1º</text>';
  $('way-chart').innerHTML = s;
}

/* response chart */
{
  const a = axes({ x: 702, y: 803, dec: 174, db: 4.8, bg: '#000', grid: '#3c3c3c', id: 'clip-resp', fs: 11 });
  const red = [[10, 0.6], [13.6, 0.9], [17.2, 1.6], [20.6, 2.4], [25.6, 3.5], [30, 3.75], [35.6, 2.6], [40.7, 0.8], [48.7, -2.5], [62, -8.4], [64.6, -9.6], [73.7, -13.8], [86.4, -18.1]];
  const cyan = [[3262, -18.1], [3515, -14], [4047, -5.3], [4681, -0.3], [5112, 1.3], [5587, 2.6], [6379, 3.5], [7281, 3.75], [10363, 3.75], [11568, 3.5], [13204, 3.8], [14427, 4.6], [15476, 5.6], [16830, 4.2], [18552, 3.4], [21950, 3.1]];
  const pts = (l) => l.map(([f, g]) => `${a.X(f).toFixed(1)},${a.Y(g).toFixed(1)}`).join(' ');
  $('resp-chart').innerHTML = a.clip + a.grid
    + `<g clip-path="url(#clip-resp)" fill="none" stroke-width="2" stroke-linejoin="round"><polyline points="${pts(red)}" stroke="#f00"/><path d="${a.line(total)}" stroke="#0f0"/><polyline points="${pts(cyan)}" stroke="#0ff"/></g>`
    + a.labels + '<text x="786" y="710" fill="#b0b0b0" font-size="16">19017 Hz | 0,0 dB</text>';
}

/* device status windows */
const input = (n) => `<div class="strip"><h4>In ${n}</h4><div class="strip-meter"><span>24dBu</span><i class="meter"></i><span>-40dB</span></div><button class="strip-m">M</button></div>`;
const output = (n) => `<div class="strip"><h4>Out ${n}</h4><div class="out-meter"><span class="zero">0dB</span><span class="lim">Lim</span><span class="clp">Clp</span><i class="meter clip"></i><div class="side"><i class="meter"></i><span>20dB</span></div><span class="low">-40dB</span></div><button class="strip-m">M</button><div class="tz"><span>T</span><output>0%</output><span>Z</span><output>-</output></div></div>`;
[['DENEB10Q', 4, 1221, 19], ['DENEB10Q', 8, 1224, 338], ['DENEB5Q', 7, 1221, 638]].forEach(([m, n, x, y]) => {
  $('desk').insertAdjacentHTML('beforeend', `<section class="win win-dev" style="left:${x}px;top:${y}px">
    <div class="titlebar"><h2>${m} - NoName - [offline ${n}]StatusLabel</h2></div>
    <div class="dev-body">
      <div class="bank"><h3>Input</h3><div class="bank-cols">${['A', 'B', 'C', 'D'].map(input).join('')}</div></div>
      <div class="bank out"><h3>Output</h3><div class="bank-cols">${[1, 2, 3, 4].map(output).join('')}</div></div>
    </div></section>`);
});
```
